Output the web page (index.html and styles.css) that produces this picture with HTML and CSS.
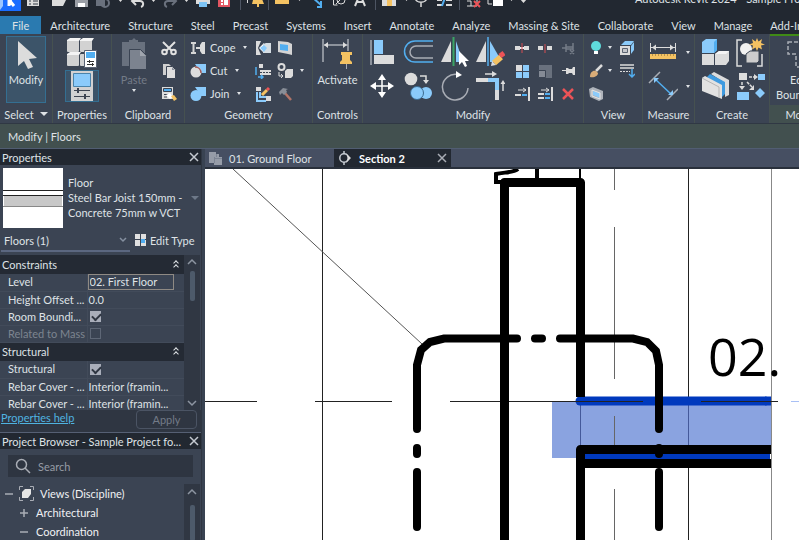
FILE: index.html
```html
<!DOCTYPE html>
<html lang="en">
<head>
    <meta charset="UTF-8">
    <meta name="viewport" content="width=device-width, initial-scale=1.0">
    <title>Autodesk Revit 2024 - Sample Project</title>
    <link rel="stylesheet" href="styles.css">
</head>
<body>
    <header class="titlebar">
        <div class="titlebar-row">
            <svg class="quick-access" width="560" height="32" viewBox="0 0 560 32" aria-hidden="true">
                <path fill="#1a6dff" d="M0 4h21v23H0z"/>
                <path fill="#9cc6ff" d="M0 16h3v6l-3 4z"/>
                <path stroke="#fff" stroke-width="3" fill="none" d="M9 22V11h4l-3 6 4 5"/>
                <path fill="#dcdcdc" d="M27 10h12v12H27z"/>
                <path stroke="#333b47" d="M29 14h2M29 17h2M29 20h2M33 14h5M33 17h5M33 20h5"/>
                <path fill="#dcdcdc" d="M52 22V12h12v2h3l-4 8z"/>
                <path fill="#9a9ea5" d="M75 12h13v11H75z"/>
                <path fill="#fff" d="M78 19h7v4h-7z"/>
                <path fill="#6a717d" d="M96 13h9v9h-9z"/>
                <circle cx="105" cy="19" r="4" stroke="#6a717d" stroke-width="2" fill="none"/>
                <path fill="#dcdcdc" d="M118 15h5l-2.500 3zM151 15h5l-2.500 3zM184 15h5l-2.500 3z"/>
                <path stroke="#dcdcdc" stroke-width="2" fill="none" d="M132 17h8c4 0 4 5 1 6M136 13l-4 4 4 4"/>
                <path stroke="#6a717d" stroke-width="2" fill="none" d="M176 17h-8c-4 0-4 5-1 6M172 13l4 4-4 4"/>
                <path fill="#dcdcdc" d="M196 13h14v7h-14z"/>
                <path fill="#7cc3f5" d="M199 18h8v5h-8z"/>
                <path fill="#e25561" d="M218 11h12v12h-12z"/>
                <path fill="#fff" d="M221 16h2v2h-2zM221 19h2v2h-2zM224 16h4v5h-4z"/>
                <path stroke="#4d5563" d="M240.500 8v18M268.500 8v18M375.500 8v18M459.500 8v18"/>
                <path stroke="#dcdcdc" d="M247.500 10v9"/>
                <path fill="#f4c262" d="M254 12h8v3l2 5h-5v3h-2v-3h-5z"/>
                <path fill="#f4c262" d="M275 15h14v5h-14z"/>
                <path fill="#dcdcdc" d="M297 14h5l-2.500 3z"/>
                <path stroke="#52aef0" stroke-width="2" fill="none" d="M312 13l9 8M321 17v6h-4"/>
                <path stroke="#dcdcdc" fill="none" d="M333.500 13v8h4M336 20l6-6"/>
                <circle cx="341" cy="16" r="4" stroke="#dcdcdc" fill="none"/>
                <path stroke="#dcdcdc" stroke-width="2" fill="none" d="M355 22l5-12 5 12M357 18h6"/>
                <path fill="#dcdcdc" d="M382 15l7-5 7 5v7h-14z"/>
                <path fill="#f4c262" d="M387 16h5v6h-5z"/>
                <path fill="#dcdcdc" d="M404 14h5l-2.500 3z"/>
                <path stroke="#dcdcdc" stroke-width="1.500" fill="none" d="M415 13c0 7 12 7 12 0M421 18v5"/>
                <path stroke="#dcdcdc" stroke-width="2" d="M437 16h5M446 16h6M437 21h5M446 21h6"/>
                <path stroke="#52aef0" stroke-width="2" d="M446 11l-4 11"/>
                <path stroke="#dcdcdc" fill="none" d="M467 17h4v5h-4M471 14h6v8h-6"/>
                <path stroke="#ec5357" stroke-width="2" d="M474 17l6 6m0-6l-6 6"/>
                <path fill="#fff" d="M493 14h10v8h-10z"/>
                <path stroke="#dcdcdc" fill="none" d="M488 15v5h4"/>
                <path fill="#dcdcdc" d="M509 14h5l-2.500 3zM520 15h7l-3.500 4z"/>
            </svg>
            <h1>Autodesk Revit 2024 - Sample Project</h1>
        </div>
    </header>

    <nav class="tabs">
        <a href="#" class="file">File</a>
        <a href="#">Architecture</a>
        <a href="#">Structure</a>
        <a href="#">Steel</a>
        <a href="#">Precast</a>
        <a href="#">Systems</a>
        <a href="#">Insert</a>
        <a href="#">Annotate</a>
        <a href="#">Analyze</a>
        <a href="#">Massing &amp; Site</a>
        <a href="#">Collaborate</a>
        <a href="#">View</a>
        <a href="#">Manage</a>
        <a href="#">Add-Ins</a>
    </nav>

    <section class="ribbon">
        <div class="panel select">
            <div class="tools">
                <button class="big active">
                    <svg width="30" height="34" viewBox="0 0 30 34"><path fill="#dcdcdc" d="M7 3v25l6-5 4 8 5-2-4-8 8-1z"/></svg>
                    Modify
                </button>
            </div>
            <h2>Select <span class="caret wide"></span></h2>
        </div>

        <div class="panel properties">
            <div class="tools column">
                <button class="icon" aria-label="Type properties">
                    <svg width="34" height="32" viewBox="0 0 34 32">
                        <g fill="#d2d2d2"><rect x="2" y="4" width="12" height="12" rx="1"/><rect x="15" y="4" width="12" height="12" rx="1"/><rect x="2" y="18" width="12" height="12" rx="1"/><rect x="15" y="18" width="12" height="12" rx="1"/></g>
                        <path fill="#f4f4f4" d="M2 4l3-2h11l-2 3H2zM15 4l3-2h11l-2 3H15zM2 18l3-2h11l-2 3H2z"/>
                        <path fill="#fff" stroke="#596273" d="M19.500 14.500h12v17h-12z"/>
                        <path fill="#52aef0" d="M21 16h9v6h-9z"/>
                        <path stroke="#333" d="M22 25.500h7M22 28.500h7M24.500 24v3M27.500 27v3"/>
                    </svg>
                </button>
                <button class="icon active" aria-label="Properties">
                    <svg width="34" height="30" viewBox="0 0 34 30">
                        <path fill="#d2d2d2" d="M6 0h22v30H6z"/>
                        <path fill="#8bcbfb" stroke="#4a84ab" d="M8.500 2.500h17v13h-17z"/>
                        <path stroke="#3d4451" d="M9 19.500h16M9 25.500h16"/>
                        <path stroke="#3d4451" stroke-width="2" d="M13 17v5M20 23v5"/>
                    </svg>
                </button>
            </div>
            <h2>Properties</h2>
        </div>

        <div class="panel clipboard">
            <div class="tools">
                <button class="big" disabled>
                    <svg width="30" height="34" viewBox="0 0 30 34">
                        <path fill="#69717e" d="M3 4h7V2h3l2-2 2 2h2v2h7v24H3z"/>
                        <path fill="#7c838f" stroke="#3b4453" d="M10.500 11.500h11l6 6v14h-17z"/>
                        <path fill="#a0a5ae" d="M21 12v6h6z"/>
                    </svg>
                    Paste
                    <span class="caret"></span>
                </button>
                <div class="stack">
                    <button class="small" aria-label="Cut to clipboard">
                        <svg width="16" height="16" viewBox="0 0 16 16"><g fill="none" stroke="#e2e2e2" stroke-width="2"><path d="M2 2l9 9M14 2L5 11"/><circle cx="3.500" cy="12" r="2.300"/><circle cx="12.500" cy="12" r="2.300"/></g></svg>
                    </button>
                    <button class="small" aria-label="Copy to clipboard">
                        <svg width="16" height="16" viewBox="0 0 16 16"><path fill="#cfcfcf" d="M2 1h6l2 2v9H2z"/><path fill="#dedede" stroke="#3b4453" d="M5.500 3.500h6l3 3v9h-9z"/><path fill="#8b919b" d="M11 4v3h3z"/></svg>
                    </button>
                    <button class="small" aria-label="Match type">
                        <svg width="16" height="16" viewBox="0 0 16 16"><path fill="#dcdcdc" d="M1 1h11v12H1z"/><path fill="#52aef0" stroke="#3d4451" d="M2.500 2.500h8v3h-8z"/><path stroke="#3d4451" d="M3 8.500h4M3 11h3"/><path fill="#fff" d="M5 9l4-2 3 4-3 2z"/><path fill="#f4c262" d="M10 10l3-1 3 4-3 2z"/></svg>
                    </button>
                </div>
            </div>
            <h2>Clipboard</h2>
        </div>

        <div class="panel geometry">
            <div class="tools">
                <div class="stack labelled">
                    <button class="small">
                        <svg width="16" height="16" viewBox="0 0 16 16"><path fill="none" stroke="#d5d5d5" stroke-width="2" d="M1 3h5M1 13h5M3.500 3v10"/><path fill="#dcdcdc" d="M6 7h4V5l2-3h3v12h-3l-2-3V9H6z"/></svg>
                        Cope <span class="caret"></span>
                    </button>
                    <button class="small">
                        <svg width="16" height="16" viewBox="0 0 16 16"><path fill="#8bcbfb" d="M5 1h11v9h-5z"/><circle cx="6" cy="9" r="5.500" fill="#dcdcdc"/><path fill="none" stroke="#a05a58" stroke-width="1.500" d="M5 4c4 0 6 3 6 6"/></svg>
                        Cut <span class="caret"></span>
                    </button>
                    <button class="small">
                        <svg width="16" height="16" viewBox="0 0 16 16"><path fill="#8bcbfb" d="M5 1h11v9h-5z"/><circle cx="6" cy="9.500" r="5.500" fill="#8bcbfb"/></svg>
                        Join <span class="caret"></span>
                    </button>
                </div>
                <div class="stack">
                    <button class="small" aria-label="Wall opening">
                        <svg width="16" height="16" viewBox="0 0 16 16"><path fill="#dcdcdc" d="M1 1h5L3 8l3 7H1z"/><path fill="#fff" d="M4 8l5-5v10z"/><path fill="#d5dde3" d="M8 4l3-1h5v10H8z"/><path fill="#8bcbfb" d="M5 8l4-3 3 3-3 4z"/></svg>
                    </button>
                    <button class="small" aria-label="Beam joins">
                        <svg width="16" height="16" viewBox="0 0 16 16"><path fill="#dcdcdc" d="M4 1h4v4H4zM5 7h11v5H5z"/><path stroke="#3d4451" stroke-dasharray="2 1" d="M5 9.500h11"/><path fill="none" stroke="#52aef0" stroke-width="1.500" d="M1 4v8M3 14h5M6 12l2 2-2 2"/></svg>
                    </button>
                    <button class="small" aria-label="Wall joins">
                        <svg width="16" height="16" viewBox="0 0 16 16"><path fill="#dcdcdc" d="M1 1h5v4H1zM11 10h5v5h-5z"/><path fill="none" stroke="#8bcbfb" stroke-width="2" d="M2 6v9h9M5 6v5h6"/><path stroke="#f4c262" stroke-width="3" d="M7 9l5-5"/><path stroke="#ec5357" stroke-width="3" d="M12 4l2-2"/></svg>
                    </button>
                </div>
                <div class="stack last">
                    <button class="small" aria-label="Split face">
                        <svg width="16" height="16" viewBox="0 0 16 16"><path fill="#d5d5d5" d="M1 1l10 1 4 2v11l-4-1-10-2z"/><path fill="#52aef0" d="M3 4l8 1v6l-8-1z"/></svg>
                    </button>
                    <button class="small" aria-label="Demolish options">
                        <svg width="16" height="16" viewBox="0 0 16 16"><circle cx="4.500" cy="4" r="3" fill="none" stroke="#dcdcdc" stroke-width="2"/><path fill="#dcdcdc" d="M8 8l2-2h6v7l-2 2H8z"/><path fill="none" stroke="#dcdcdc" d="M2 9v4h4M4 11l2 2-2 2"/></svg>
                        <span class="caret"></span>
                    </button>
                    <button class="small" aria-label="Demolish">
                        <svg width="16" height="16" viewBox="0 0 16 16"><path stroke="#b07468" stroke-width="2.500" d="M7 6l7 8"/><path fill="#888e97" d="M2 6l4-4 5 1-2 1 1 2-3 3-2-2-2 2z"/></svg>
                    </button>
                </div>
            </div>
            <h2>Geometry</h2>
        </div>

        <div class="panel controls">
            <div class="tools">
                <button class="big">
                    <svg width="32" height="34" viewBox="0 0 32 34"><path stroke="#a9adb5" stroke-width="1.500" d="M2 1v23M27 1v12M3 7h24"/><path fill="#dcdcdc" d="M3 7l4-3v6zM26 7l-4-3v6z"/><path fill="#f4c262" d="M20 14h11v3h-2v5l2 2v2H19v-2l2-2v-5h-1z"/><path stroke="#a9adb5" d="M25.500 26v5"/></svg>
                    Activate
                </button>
            </div>
            <h2>Controls</h2>
        </div>

        <div class="panel modify">
            <div class="tools">
                <div class="grid-large">
                    <button class="icon" aria-label="Align">
                        <svg width="30" height="30" viewBox="0 0 30 30"><path stroke="#a9adb5" stroke-width="1.500" d="M4 3v25"/><path fill="#8bcbfb" d="M7 3h9v14H7z"/><path fill="#dcdcdc" d="M7 18h20v9H7z"/></svg>
                    </button>
                    <button class="icon" aria-label="Offset">
                        <svg width="30" height="30" viewBox="0 0 30 30"><g fill="none" stroke-width="1.500"><path stroke="#52aef0" d="M30 4H12a10.500 10.500 0 0 0 0 21h18"/><path stroke="#a9adb5" d="M30 9H13a6 6 0 0 0 0 12h17"/></g></svg>
                    </button>
                    <button class="icon" aria-label="Mirror - Pick Axis">
                        <svg width="30" height="30" viewBox="0 0 30 30"><path fill="#dcdcdc" d="M12 4v21H2z"/><path fill="#8bcbfb" d="M17 4v21h7z"/><path stroke="#3ba565" stroke-width="2" d="M14.500 0v29"/><path fill="#fff" d="M20 14v14l3-3 3 5 2-1-2-5h4z"/></svg>
                    </button>
                    <button class="icon" aria-label="Mirror - Draw Axis">
                        <svg width="30" height="30" viewBox="0 0 30 30"><path fill="#dcdcdc" d="M11 4v21H1z"/><path fill="#8bcbfb" d="M15 4v21h8V18z"/><path stroke="#4f94c7" stroke-width="2" d="M13 0v29"/><path stroke="#f4c262" stroke-width="6" d="M19 26l7-6"/><path stroke="#ec5357" stroke-width="5" d="M25 19l4-3"/><path fill="#dcdcdc" d="M16 29l1-5 4 4z"/></svg>
                    </button>
                    <button class="icon" aria-label="Move">
                        <svg width="30" height="30" viewBox="0 0 30 30"><path stroke="#fff" stroke-width="1.500" d="M15 5v20M5 15h20"/><path fill="#fff" d="M15 3l4 6h-8zM15 27l4-6h-8zM3 15l6-4v8zM27 15l-6-4v8z"/></svg>
                    </button>
                    <button class="icon" aria-label="Copy">
                        <svg width="30" height="30" viewBox="0 0 30 30"><circle cx="8" cy="8" r="6.300" fill="#dcdcdc"/><circle cx="23" cy="22" r="6" fill="#8bcbfb"/><circle cx="14" cy="22" r="6.500" fill="#8bcbfb" stroke="#3b6a90"/><path fill="none" stroke="#dcdcdc" stroke-width="1.500" d="M17 5h6v7"/><path fill="#dcdcdc" d="M20 9h6l-3 4z"/></svg>
                    </button>
                    <button class="icon" aria-label="Rotate">
                        <svg width="30" height="30" viewBox="0 0 30 30"><path fill="none" stroke="#a9adb5" stroke-width="1.500" d="M18 3.500A12.800 12.800 0 1 0 29 17"/><path fill="#fff" d="M17 0l6 4-6 3z"/></svg>
                    </button>
                    <button class="icon" aria-label="Trim/Extend to Corner">
                        <svg width="30" height="30" viewBox="0 0 30 30"><path fill="#dcdcdc" d="M1 7h12v4H1zM20 19h4v10h-4z"/><path fill="#8bcbfb" d="M13 7h11v12h-4v-8h-7z"/><path stroke="#dcdcdc" stroke-width="1.500" d="M10 3h8M28 11v9"/><path fill="#dcdcdc" d="M17 0l5 3-5 3zM25.500 13l2.500-4 2.500 4z"/></svg>
                    </button>
                </div>
                <div class="grid-small">
                    <button class="small" aria-label="Split element"><svg width="16" height="16" viewBox="0 0 16 16"><path fill="#dcdcdc" d="M1 6h5v4H1zM10 6h5v4h-5z"/><path fill="#f2f2f2" d="M6 7h4v2H6z"/><path stroke="#d94c53" d="M8 3v10"/></svg></button>
                    <button class="small" aria-label="Split with gap"><svg width="16" height="16" viewBox="0 0 16 16"><path fill="#dcdcdc" d="M1 6h5v4H1zM10 6h5v4h-5z"/><path stroke="#d94c53" d="M8 4v9"/></svg></button>
                    <button class="small" disabled aria-label="Unpin"><svg width="16" height="16" viewBox="0 0 16 16"><path fill="none" stroke="#747b87" stroke-width="1.500" d="M2 8h4M6 4v8M6 7h7M6 9h7M13 3v7M10 10l4 4m0-4l-4 4"/></svg></button>
                    <button class="small" aria-label="Array"><svg width="16" height="16" viewBox="0 0 16 16"><path fill="#dcdcdc" d="M2 2h6v6H2z"/><path fill="#8bcbfb" d="M9 2h6v6H9zM2 9h6v6H2zM9 9h6v6H9z"/></svg></button>
                    <button class="small" disabled aria-label="Scale"><svg width="16" height="16" viewBox="0 0 16 16"><path fill="#69717e" d="M2 2h13v13H2z"/><path fill="#858b96" stroke="#3b4453" d="M1.500 7.500h7v7h-7z"/></svg></button>
                    <button class="small" aria-label="Pin"><svg width="16" height="16" viewBox="0 0 16 16"><path fill="#dcdcdc" d="M2 7h4V5h2l1 1h3l1-2h2v8h-2l-1-2H9l-1 1H6V8H2z"/></svg></button>
                    <button class="small" aria-label="Trim single"><svg width="16" height="16" viewBox="0 0 16 16"><path stroke="#dcdcdc" stroke-width="2" d="M1 9h6M15 1v14"/><path stroke="#52aef0" stroke-width="2" d="M8 9h5"/><path stroke="#dcdcdc" d="M4 4h8M9 2l3 2-3 2" fill="none"/></svg></button>
                    <button class="small" aria-label="Trim multiple"><svg width="16" height="16" viewBox="0 0 16 16"><path stroke="#dcdcdc" stroke-width="2" d="M1 8h6M1 12h6M15 1v14"/><path stroke="#52aef0" stroke-width="2" d="M8 8h5M8 12h5"/><path stroke="#dcdcdc" d="M4 4h8M9 2l3 2-3 2" fill="none"/></svg></button>
                    <button class="small" aria-label="Delete"><svg width="16" height="16" viewBox="0 0 16 16"><path stroke="#ec5357" stroke-width="2.500" d="M3 3l10 10M13 3L3 13"/></svg></button>
                </div>
            </div>
            <h2>Modify</h2>
        </div>

        <div class="panel view">
            <div class="tools">
                <div class="stack">
                    <button class="small" aria-label="Reveal hidden"><svg width="16" height="16" viewBox="0 0 16 16"><circle cx="8" cy="6" r="5" fill="#5fdbdc"/><path fill="#fff" d="M6 11h4v3H6z"/></svg><span class="caret"></span></button>
                    <button class="small" aria-label="Override graphics"><svg width="16" height="16" viewBox="0 0 16 16"><path stroke="#dcdcdc" stroke-width="2.500" d="M14 2L8 8"/><path fill="#d9ac78" d="M2 14c0-5 3-7 6-6l2 2c0 3-4 5-8 4z"/></svg><span class="caret"></span></button>
                    <button class="small" aria-label="Selection box"><svg width="16" height="16" viewBox="0 0 16 16"><path fill="#aeb3ba" d="M1 3l4-2 10 4v8l-4 2L2 11z"/><path fill="#8bcbfb" d="M5 5l7 2v5L5 9z"/><path fill="none" stroke="#e5e5e5" d="M4 4l8 3v6l-8-3z"/></svg></button>
                </div>
                <div class="stack">
                    <button class="small" aria-label="Displace"><svg width="16" height="16" viewBox="0 0 16 16"><path fill="#dcdcdc" d="M1 6h10v9H1z"/><path fill="#8bcbfb" d="M2 5l4-4h9l-3 4zM12 6l3-4v8l-3 4z"/><path fill="#c3c6cb" stroke="#5b6472" d="M3.500 8.500h5v4h-5z"/></svg></button>
                    <button class="small" aria-label="Linework"><svg width="16" height="16" viewBox="0 0 16 16"><path stroke="#dcdcdc" stroke-width="1.500" d="M1 2h14M1 5h14"/><path stroke="#dcdcdc" stroke-dasharray="2 1" d="M1 8.500h10"/><path fill="none" stroke="#52aef0" stroke-width="1.500" d="M13 6v8M10 11l3 3 3-3"/></svg></button>
                </div>
            </div>
            <h2>View</h2>
        </div>

        <div class="panel measure">
            <div class="tools column">
                <button class="icon" aria-label="Measure between references"><svg width="30" height="30" viewBox="0 0 30 30"><path stroke="#dcdcdc" d="M2.500 6v9M27.500 6v9M3 10.500h24"/><path fill="#dcdcdc" d="M4 10.500l4-3v6zM26 10.500l-4-3v6z"/><path fill="#f4c262" d="M2 17h26v5H2z"/><path stroke="#7a6231" stroke-dasharray="1 2" d="M4 18h23"/></svg><span class="caret"></span></button>
                <button class="icon" aria-label="Aligned dimension"><svg width="30" height="30" viewBox="0 0 30 30"><path stroke="#a9adb5" stroke-width="1.500" d="M1 12L12 1M19 29l11-11"/><path stroke="#52aef0" stroke-width="1.500" d="M6 7l18 17"/><path fill="#8bcbfb" d="M6 7h5l-5 5zM25 24h-5l5-5z"/></svg><span class="caret"></span></button>
            </div>
            <h2>Measure</h2>
        </div>

        <div class="panel create">
            <div class="tools">
                <div class="grid-large">
                    <button class="icon" aria-label="Create assembly"><svg width="30" height="30" viewBox="0 0 30 30"><path fill="#8bcbfb" d="M2 5l4-3h11v11l-3 3H2z"/><path fill="#52aef0" d="M14 5l3-3v11l-3 3z"/><path fill="#dcdcdc" d="M2 17h12v11H2zM15 17l4-3h10v10l-3 4H15z"/><path fill="#f4f4f4" d="M15 17l4-3h10l-3 3z"/></svg></button>
                    <button class="icon" aria-label="Create group"><svg width="30" height="30" viewBox="0 0 30 30"><path fill="none" stroke="#dcdcdc" stroke-width="1.500" d="M7 3H2v26h5M22 29h5V17"/><circle cx="11" cy="12" r="6" fill="#f2f2f2"/><path fill="#cdcdcd" stroke="#3b4453" d="M11 17l4-3h9v10l-2 2H11z"/><path fill="#f4c262" d="M22 1l1.500 3.500L27 2l-1 4 4 1.500-4 1 1 4-3.500-2-1.500 3.500-1.500-3.500-3.500 2 1-4-4-1 4-1.500-1-4 3.500 2.500z"/></svg></button>
                    <button class="icon" aria-label="Create parts"><svg width="30" height="30" viewBox="0 0 30 30"><path fill="#dcdcdc" d="M11 3l3-2 15 8v15l-4 2V12z"/><path fill="#3f9be0" d="M7 6l3-3 15 8v12l-3 3z"/><path fill="#e2e2e2" d="M2 7l3-2 17 9v14L2 20z"/><path fill="none" stroke="#b5b5b5" d="M2 7l17 9v11"/></svg></button>
                    <button class="icon" aria-label="Create similar"><svg width="30" height="30" viewBox="0 0 30 30"><path fill="#dcdcdc" d="M4 2h8v7H4z"/><path fill="#8bcbfb" d="M23 3h7v6h-7zM2 21h12v8H2zM25 17l5 5-5 5-5-5z"/><path stroke="#dcdcdc" stroke-width="1.500" stroke-dasharray="3 1" d="M14 6h6M7 11v6M12 11l6 6"/><path fill="#dcdcdc" d="M19 3l4 3-4 3zM4 15h6l-3 4zM19 14v5h-5z"/></svg></button>
                </div>
            </div>
            <h2>Create</h2>
        </div>

        <div class="panel mode">
            <div class="tools">
                <button class="big">
                    <svg width="30" height="34" viewBox="0 0 30 34"><path fill="none" stroke="#a9adb5" stroke-width="1.500" stroke-dasharray="4 2" d="M3 4h24v25H11V16H3z"/></svg>
                    Edit<br>Boundary
                </button>
            </div>
            <h2>Mode</h2>
        </div>
    </section>

    <div class="options">Modify | Floors</div>

    <main class="workspace">
        <aside class="dock">
            <section class="palette">
                <div class="palette-title">
                    <h2>Properties</h2>
                    <button class="close" aria-label="Close properties"><svg width="10" height="10" viewBox="0 0 10 10"><path stroke="#c5cad1" stroke-width="1.500" d="M1 1l8 8M9 1L1 9"/></svg></button>
                </div>
                <div class="type">
                    <svg class="preview" width="60" height="60" viewBox="0 0 60 60"><path fill="#fff" d="M0 0h60v60H0z"/><path fill="#c8c8c8" d="M1 28h58v10H1z"/><path stroke="#222" d="M0 22.500h60M0 27.500h60"/><path stroke="#888" d="M0 38.500h60"/></svg>
                    <p>Floor<br>Steel Bar Joist 150mm -<br>Concrete 75mm w VCT</p>
                    <span class="caret wide dim"></span>
                </div>
                <div class="filter">
                    <div class="dropdown">
                        <select aria-label="Category"><option>Floors (1)</option></select>
                        <svg width="8" height="8" viewBox="0 0 8 8"><path fill="none" stroke="#8590a0" stroke-width="1.500" d="M1 2l3 3 3-3"/></svg>
                    </div>
                    <button class="edit-type">
                        <svg width="13" height="13" viewBox="0 0 13 13"><path fill="#e0e0e0" d="M1 0h5v5H1zM7 0h5v5H7zM1 6h5v6H1zM7 6h5v6H7z"/><path fill="#52aef0" d="M7 5h4v4H7z"/></svg>
                        Edit Type
                    </button>
                </div>
                <div class="scroller props">
                    <table>
                        <colgroup><col class="name"><col></colgroup>
                        <tbody>
                            <tr><th colspan="2">Constraints<span class="fold"></span></th></tr>
                            <tr><td><label for="level">Level</label></td><td><input type="text" id="level" value="02. First Floor"></td></tr>
                            <tr><td>Height Offset ...</td><td>0.0</td></tr>
                            <tr><td><label for="bounding">Room Boundi...</label></td><td><input type="checkbox" id="bounding" checked></td></tr>
                            <tr class="off"><td><label for="mass">Related to Mass</label></td><td><input type="checkbox" id="mass" disabled></td></tr>
                            <tr><th colspan="2">Structural<span class="fold"></span></th></tr>
                            <tr><td><label for="structural">Structural</label></td><td><input type="checkbox" id="structural" checked></td></tr>
                            <tr><td>Rebar Cover - ...</td><td>Interior (framin...</td></tr>
                            <tr><td>Rebar Cover - ...</td><td>Interior (framin...</td></tr>
                        </tbody>
                    </table>
                    <div class="scrollbar">
                        <svg width="16" height="14" viewBox="0 0 16 14"><path fill="none" stroke="#8d95a1" stroke-width="1.500" d="M4 9l4-4 4 4"/></svg>
                        <span class="thumb"></span>
                        <svg width="16" height="14" viewBox="0 0 16 14"><path fill="none" stroke="#8d95a1" stroke-width="1.500" d="M4 5l4 4 4-4"/></svg>
                    </div>
                </div>
                <div class="palette-foot">
                    <a href="#">Properties help</a>
                    <button class="apply" disabled>Apply</button>
                </div>
            </section>

            <section class="palette browser">
                <div class="palette-title">
                    <h2>Project Browser - Sample Project fo...</h2>
                    <button class="close" aria-label="Close browser"><svg width="10" height="10" viewBox="0 0 10 10"><path stroke="#c5cad1" stroke-width="1.500" d="M1 1l8 8M9 1L1 9"/></svg></button>
                </div>
                <div class="search">
                    <svg width="16" height="16" viewBox="0 0 16 16"><circle cx="6.500" cy="6.500" r="5" fill="none" stroke="#a9adb5" stroke-width="1.500"/><path stroke="#a9adb5" stroke-width="1.500" d="M10 10l5 5"/></svg>
                    <input type="text" placeholder="Search" aria-label="Search">
                </div>
                <div class="scroller">
                    <ul class="tree">
                        <li>
                            <svg width="8" height="8" viewBox="0 0 8 8"><path stroke="#a9adb5" stroke-width="1.500" d="M0 4h8"/></svg>
                            <svg width="15" height="15" viewBox="0 0 15 15"><path fill="none" stroke="#a9adb5" d="M4 .500H.500V4M11 .500h3.500V4M4 14.500H.500V11M11 14.500h3.500V11"/><path fill="#e6e6e6" d="M3 6l3-3h6v5l-3 4H3z"/></svg>
                            Views (Discipline)
                        </li>
                        <li class="child">
                            <svg width="8" height="8" viewBox="0 0 8 8"><path stroke="#a9adb5" stroke-width="1.500" d="M0 4h8M4 0v8"/></svg>
                            Architectural
                        </li>
                        <li class="child">
                            <svg width="8" height="8" viewBox="0 0 8 8"><path stroke="#a9adb5" stroke-width="1.500" d="M0 4h8"/></svg>
                            Coordination
                        </li>
                    </ul>
                    <div class="scrollbar">
                        <svg width="16" height="16" viewBox="0 0 16 16"><path fill="none" stroke="#8d95a1" stroke-width="1.500" d="M4 10l4-4 4 4"/></svg>
                        <span class="thumb tall"></span>
                    </div>
                </div>
            </section>
        </aside>

        <section class="document">
            <nav class="views">
                <a href="#" class="view-tab">
                    <svg width="14" height="14" viewBox="0 0 14 14"><path fill="#969ca8" d="M0 1h7v2h3v3h3v8H5v-2H0z"/><path fill="none" stroke="#7c8493" d="M7.500 3v3M5 7.500h8M5.500 6v6"/></svg>
                    01. Ground Floor
                </a>
                <a href="#" class="view-tab current">
                    <svg width="14" height="14" viewBox="0 0 14 14"><circle cx="6" cy="7" r="4.200" fill="none" stroke="#c5cad1" stroke-width="1.500"/><path fill="#dcdcdc" d="M8 2l5 5-5 5 2-5z"/><path stroke="#c5cad1" stroke-width="1.500" d="M6 0v3M6 11v3"/></svg>
                    Section 2
                    <svg class="x" width="10" height="10" viewBox="0 0 10 10"><path stroke="#a9adb5" stroke-width="1.500" d="M1 1l8 8M9 1L1 9"/></svg>
                </a>
            </nav>
            <svg class="drawing" viewBox="205 169 594 371" preserveAspectRatio="xMinYMin slice">
                <!-- selected floor -->
                <path fill="#8aa3e0" d="M552 401h219v50H580v7h-28z"/>
                <!-- grids and thin lines -->
                <g fill="none" stroke="#222">
                    <path d="M322.500 169v371M688.500 169v371"/>
                    <path stroke="#555" d="M233 169l189 175"/>
                    <path stroke="#666" d="M614.500 169v21M614.500 227v152M614.500 416v29M614.500 489v51"/>
                    <path stroke="#888" d="M771.500 169v371"/>
                    <path stroke="#44599a" d="M580.500 405v45M688.500 405v45"/>
                </g>
                <path stroke="#0039bd" stroke-width="9" stroke-linecap="round" d="M580 401h185"/>
                <path fill="#0039bd" d="M765 396.500h6v9h-6zM584 454h186v5H584z"/>
                <path stroke="#222" d="M205 401.500h52M315 401.500h77M450 401.500h193M701 401.500h77"/>
                <path stroke="#a9c0f5" d="M791 401.500h8"/>
                <!-- wall -->
                <g fill="none" stroke="#000" stroke-width="9" stroke-linejoin="round">
                    <path d="M504.500 540V182.500h76V397"/>
                    <path d="M771 449.500H580.500V540M771 463.500H584"/>
                </g>
                <path fill="none" stroke="#000" stroke-width="4" d="M518 169c-5 4-14 3-22 5v8h8M537 169v11"/>
                <path stroke="#000" stroke-width="2" d="M580 169v11"/>
                <!-- callout boundary -->
                <g fill="none" stroke="#000" stroke-width="8" stroke-linecap="round">
                    <path d="M417 429v-64l4-15 9-8 14-3.500h73M535 338.500h7M560 338.500h73l14 3.500 9 9 3 14v64"/>
                    <path d="M417 448v6M659 448v6M417 472v55M659 472v55"/>
                </g>
                <text x="708" y="376">02.</text>
            </svg>
        </section>
    </main>
</body>
</html>
```

FILE: styles.css
```css
* {
    box-sizing: border-box;
}

body {
    margin: 0;
    height: 100vh;
    display: flex;
    flex-direction: column;
    overflow: hidden;
    background: #2f3642;
    color: #dfe2e6;
    font-family: Lato, "Open Sans", sans-serif;
    font-size: 11px;
    line-height: 15px;
}

h1, h2, p, ul {
    margin: 0;
    padding: 0;
    font-size: 11px;
    font-weight: normal;
}

a {
    color: inherit;
    text-decoration: none;
}

button, input, select {
    font: inherit;
    color: inherit;
    background: none;
    border: 0;
    padding: 0;
}

svg {
    flex: none;
    display: block;
}

/* title bar */
.titlebar {
    flex: none;
    height: 16px;
    background: #222831;
    overflow: hidden;
}

.titlebar-row {
    display: flex;
    align-items: center;
    gap: 75px;
    height: 28px;
    margin-top: -16px;
}

.titlebar .quick-access {
    align-self: flex-start;
}

.titlebar h1 {
    white-space: nowrap;
}

/* ribbon tabs */
.tabs {
    flex: none;
    display: flex;
    height: 18px;
    background: #222831;
    overflow: hidden;
    white-space: nowrap;
}

.tabs a {
    padding: 2px 9px;
}

.tabs .file {
    padding: 2px 12px;
    background: #2a7ab0;
}

/* ribbon */
.ribbon {
    flex: none;
    display: flex;
    height: 90px;
    background: #3b4453;
    overflow: hidden;
    border-bottom: 1px solid #303844;
}

.panel {
    flex: none;
    display: flex;
    flex-direction: column;
    border-right: 1px solid #465150;
}

.panel h2 {
    height: 18px;
    display: flex;
    align-items: center;
    justify-content: center;
    gap: 6px;
}

.tools {
    height: 72px;
    padding-top: 2px;
    display: flex;
    justify-content: center;
}

.tools.column {
    flex-direction: column;
    justify-content: flex-start;
    align-items: center;
    gap: 2px;
}

.select { width: 53px; }
.properties { width: 59px; }
.clipboard { width: 73px; }
.geometry { width: 128px; }
.controls { width: 50px; }
.modify { width: 221px; }
.view { width: 59px; }
.measure { width: 52px; }
.create { width: 75px; }
.mode { width: 60px; border-top: 2px solid #3f8a16; }

.mode .tools {
    height: 70px;
    padding-top: 0;
}

.mode h2 {
    background: #42504f;
}

.big {
    display: flex;
    flex-direction: column;
    align-items: center;
    height: 67px;
    padding: 2px 0;
    white-space: nowrap;
}

.big.active {
    width: 40px;
}

.active {
    background: #3c5469;
    outline: 1px solid #346f92;
    outline-offset: -1px;
}

.big:disabled {
    color: #747b87;
}

.big .caret {
    margin-top: 2px;
}

.icon {
    display: flex;
    align-items: center;
    justify-content: center;
    gap: 8px;
    height: 32px;
}

.stack {
    display: flex;
    flex-direction: column;
}

.small {
    display: flex;
    align-items: center;
    gap: 4px;
    height: 23px;
}

.clipboard .tools {
    gap: 12px;
}

.geometry .tools {
    justify-content: flex-start;
    padding-left: 5px;
}

.labelled {
    width: 65px;
}

.geometry .last {
    margin-left: 6px;
}

.last .small {
    gap: 7px;
}

.geometry .labelled .caret {
    margin-left: 4px;
}

.grid-large {
    display: grid;
    grid-template-columns: repeat(4, 30px);
    column-gap: 6px;
    row-gap: 2px;
    align-content: start;
}

.create .grid-large {
    grid-template-columns: repeat(2, 30px);
    column-gap: 5px;
}

.grid-small {
    display: grid;
    grid-template-columns: repeat(3, 23px);
    align-content: start;
}

.modify .tools {
    justify-content: flex-start;
    padding-left: 4px;
    gap: 9px;
}

.view .tools {
    justify-content: flex-start;
    padding-left: 4px;
    gap: 7px;
}

.caret {
    width: 0;
    border: 2px solid transparent;
    border-top: 3px solid #dfe2e6;
    border-bottom: 0;
}

.caret.wide {
    border-width: 4px 4px 0;
}

.caret.dim {
    border-top-color: #6d7888;
}

/* options bar */
.options {
    flex: none;
    height: 25px;
    padding: 5px 8px;
    background: #42504f;
    border-bottom: 1px solid #515d72;
}

/* workspace */
.workspace {
    flex: 1;
    min-height: 0;
    display: flex;
}

.dock {
    flex: none;
    width: 205px;
    display: flex;
    flex-direction: column;
    border-right: 3px solid #394352;
    background: #2f3642;
}

.palette {
    flex: none;
    background: #3b4453;
    width: 201px;
}

.palette-title {
    display: flex;
    align-items: center;
    justify-content: space-between;
    height: 16px;
    padding: 0 2px;
    background: #222831;
    white-space: nowrap;
}

.type {
    display: flex;
    align-items: center;
    gap: 5px;
    height: 65px;
    padding: 0 2px 0 3px;
}

.type p {
    flex: 1;
    white-space: nowrap;
}

.filter {
    display: flex;
    gap: 4px;
    height: 25px;
    padding-left: 1px;
}

.dropdown {
    display: flex;
    align-items: center;
    width: 129px;
    height: 22px;
    padding: 0 3px;
    border-bottom: 2px solid #5b6780;
}

.dropdown select {
    flex: 1;
    appearance: none;
}

.edit-type {
    display: flex;
    align-items: center;
    gap: 3px;
    height: 20px;
    white-space: nowrap;
}

.scroller {
    display: flex;
    overflow: hidden;
}

.props {
    height: 155px;
}

table {
    flex: none;
    width: 184px;
    table-layout: fixed;
    border-collapse: collapse;
    align-self: flex-start;
}

.name {
    width: 87px;
}

td {
    height: 17px;
    line-height: 16px;
    padding: 0 0 0 8px;
    white-space: nowrap;
    border-bottom: 1px solid #424b5a;
}

td + td {
    padding: 0 11px 0 1px;
    border-left: 1px solid #424b5a;
}

th {
    height: 19px;
    padding: 0 2px;
    background: #242a34;
    text-align: left;
    font-weight: normal;
}

.fold {
    float: right;
    margin: 4px 3px;
    width: 5px;
    height: 8px;
}

.fold::before,
.fold::after {
    content: "";
    display: block;
    width: 3px;
    height: 3px;
    border: solid #dfe2e6;
    border-width: 1px 0 0 1px;
    transform: rotate(45deg);
}

.off {
    color: #7d8490;
}

td input[type="text"] {
    display: block;
    width: 86px;
    height: 16px;
    padding-left: 1px;
    margin-left: -1px;
    border: 1px solid #8f8a84;
}

td input[type="checkbox"] {
    display: block;
    width: 11px;
    height: 11px;
    margin: 0 0 0 1px;
    appearance: none;
    border: 1px solid #5e6776;
}

td input[type="checkbox"]:checked {
    border-color: #a9aeba;
    background: #a9aeba;
}

td input:checked::before {
    content: "";
    display: block;
    width: 7px;
    height: 4px;
    margin: 1px;
    border: solid #2f3642;
    border-width: 0 0 2px 2px;
    transform: rotate(-45deg);
}

.scrollbar {
    width: 16px;
    display: flex;
    flex-direction: column;
    align-items: center;
    background: #303743;
}

.thumb {
    width: 5px;
    height: 30px;
    margin: 2px 0 auto;
    border-radius: 2px;
    background: #4d5a6a;
}

.thumb.tall {
    flex: 1;
    margin: 5px 0 0;
}

.palette-foot {
    display: flex;
    justify-content: space-between;
    height: 23px;
    padding: 0 4px 3px 1px;
    background: #2f3642;
    border-bottom: 1px solid #566074;
}

.palette-foot a {
    color: #4fb3e0;
    text-decoration: underline;
}

.apply {
    width: 61px;
    height: 19px;
    border: 1px solid #4b5464;
    border-radius: 4px;
    color: #737b88;
}

.browser {
    flex: 1;
    display: flex;
    flex-direction: column;
}

.search {
    display: flex;
    align-items: center;
    gap: 7px;
    height: 22px;
    margin: 6px 8px 7px;
    padding: 0 7px;
    background: #2e3541;
}

.search input {
    flex: 1;
    min-width: 0;
}

.search input::placeholder {
    color: #969ca6;
}

.browser .scroller {
    flex: 1;
}

.tree {
    width: 184px;
    list-style: none;
    color: #f0f1f3;
}

.tree li {
    display: flex;
    align-items: center;
    gap: 6px;
    height: 19px;
    padding-left: 5px;
}

.tree .child {
    gap: 8px;
    padding-left: 20px;
}

/* drawing area */
.document {
    flex: 1;
    min-width: 0;
    display: flex;
    flex-direction: column;
}

.views {
    display: flex;
    height: 20px;
    background: #464f62;
    border-bottom: 2px solid #29303b;
}

.view-tab {
    display: flex;
    align-items: center;
    gap: 6px;
    width: 129px;
    padding-left: 4px;
}

.view-tab.current {
    gap: 7px;
    width: 117px;
    background: #222831;
    color: #fff;
    font-weight: bold;
}

.view-tab .x {
    margin: 0 4px 0 auto;
}

.drawing {
    flex: 1;
    min-height: 0;
    width: 100%;
    background: #fff;
}

.drawing text {
    font-family: "Open Sans", sans-serif;
    font-size: 52px;
    font-weight: 500;
}
```
